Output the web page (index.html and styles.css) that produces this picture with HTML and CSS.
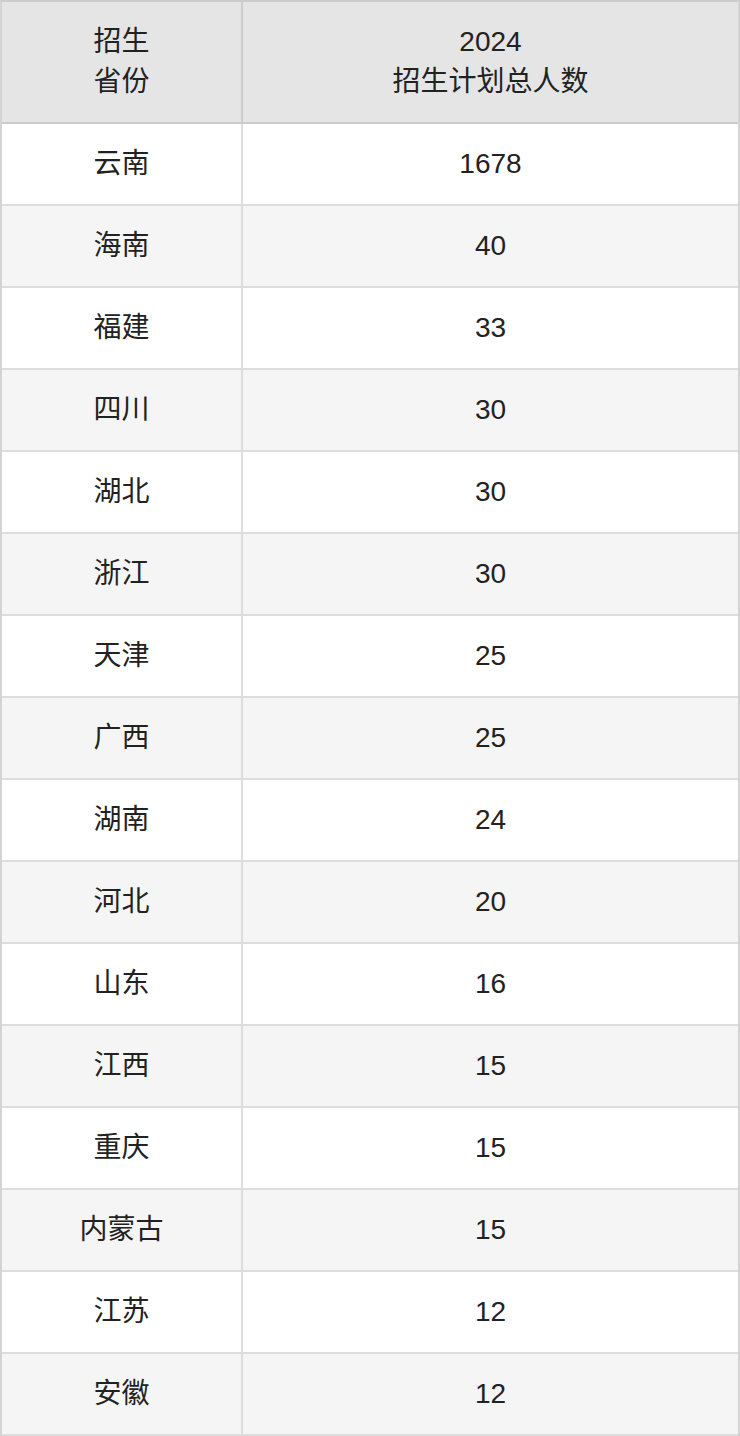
FILE: index.html
```html
<!DOCTYPE html>
<html lang="zh">
<head>
<meta charset="utf-8">
<title>招生计划</title>
<link rel="stylesheet" href="styles.css">
</head>
<body>
<div class="table">
  <div class="cell head left">招生<br>省份</div>
  <div class="cell head">2024<br>招生计划总人数</div>

  <div class="cell left">云南</div><div class="cell">1678</div>
  <div class="cell left alt">海南</div><div class="cell alt">40</div>
  <div class="cell left">福建</div><div class="cell">33</div>
  <div class="cell left alt">四川</div><div class="cell alt">30</div>
  <div class="cell left">湖北</div><div class="cell">30</div>
  <div class="cell left alt">浙江</div><div class="cell alt">30</div>
  <div class="cell left">天津</div><div class="cell">25</div>
  <div class="cell left alt">广西</div><div class="cell alt">25</div>
  <div class="cell left">湖南</div><div class="cell">24</div>
  <div class="cell left alt">河北</div><div class="cell alt">20</div>
  <div class="cell left">山东</div><div class="cell">16</div>
  <div class="cell left alt">江西</div><div class="cell alt">15</div>
  <div class="cell left">重庆</div><div class="cell">15</div>
  <div class="cell left alt">内蒙古</div><div class="cell alt">15</div>
  <div class="cell left">江苏</div><div class="cell">12</div>
  <div class="cell left alt">安徽</div><div class="cell alt">12</div>
</div>
</body>
</html>
```

FILE: styles.css
```css
html, body {
  margin: 0;
  padding: 0;
  background: #ffffff;
}

.table {
  width: 740px;
  box-sizing: border-box;
  display: grid;
  grid-template-columns: 241px 495px;
  border-top: 2px solid #cccccc;
  border-left: 2px solid #d4d4d4;
  border-right: 2px solid #d4d4d4;
  font-family: "Liberation Sans", "Noto Sans CJK SC", sans-serif;
  font-size: 28px;
  line-height: 40px;
  color: #222222;
}

.cell {
  height: 82px;
  box-sizing: border-box;
  display: flex;
  align-items: center;
  justify-content: center;
  text-align: center;
  background: #ffffff;
  border-bottom: 2px solid #dddddd;
}

.cell.left {
  border-right: 2px solid #dddddd;
}

.cell.alt {
  background: #f5f5f5;
}

.cell.head {
  height: 122px;
  background: #e5e5e5;
  border-bottom-color: #cccccc;
}

.cell.head.left {
  border-right-color: #cccccc;
}
```
